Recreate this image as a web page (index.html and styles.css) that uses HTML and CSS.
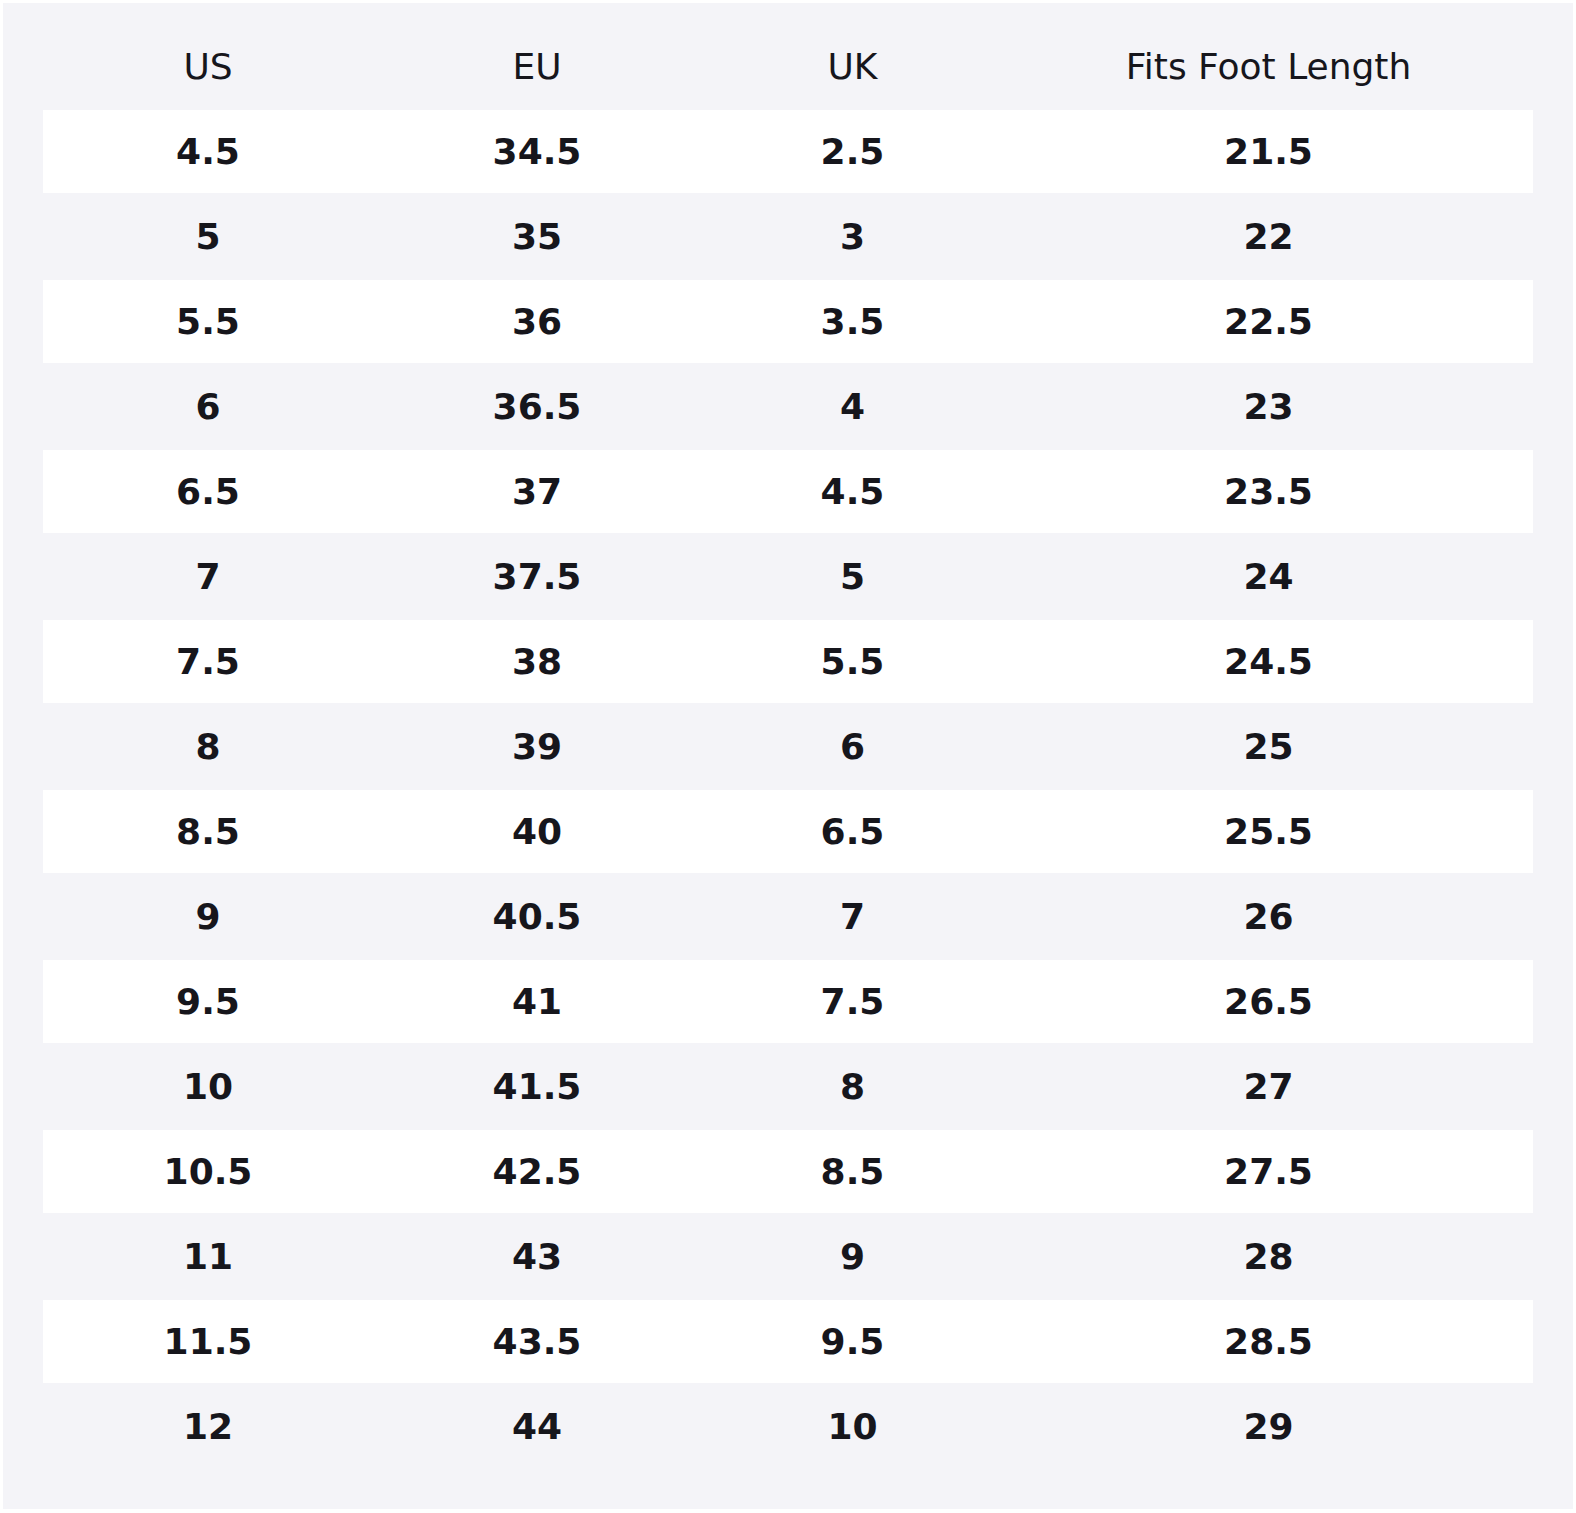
FILE: index.html
```html
<!DOCTYPE html>
<html>
<head>
  <meta charset="UTF-8">
  <title>Size Chart</title>
  <link rel="stylesheet" href="styles.css">
</head>
<body>
  <div class="chart">
    <table class="size-table">
      <colgroup>
        <col class="col-us">
        <col class="col-eu">
        <col class="col-uk">
        <col class="col-foot">
      </colgroup>
      <thead>
        <tr>
          <th>US</th>
          <th>EU</th>
          <th>UK</th>
          <th>Fits Foot Length</th>
        </tr>
      </thead>
      <tbody>
        <tr><td>4.5</td><td>34.5</td><td>2.5</td><td>21.5</td></tr>
        <tr><td>5</td><td>35</td><td>3</td><td>22</td></tr>
        <tr><td>5.5</td><td>36</td><td>3.5</td><td>22.5</td></tr>
        <tr><td>6</td><td>36.5</td><td>4</td><td>23</td></tr>
        <tr><td>6.5</td><td>37</td><td>4.5</td><td>23.5</td></tr>
        <tr><td>7</td><td>37.5</td><td>5</td><td>24</td></tr>
        <tr><td>7.5</td><td>38</td><td>5.5</td><td>24.5</td></tr>
        <tr><td>8</td><td>39</td><td>6</td><td>25</td></tr>
        <tr><td>8.5</td><td>40</td><td>6.5</td><td>25.5</td></tr>
        <tr><td>9</td><td>40.5</td><td>7</td><td>26</td></tr>
        <tr><td>9.5</td><td>41</td><td>7.5</td><td>26.5</td></tr>
        <tr><td>10</td><td>41.5</td><td>8</td><td>27</td></tr>
        <tr><td>10.5</td><td>42.5</td><td>8.5</td><td>27.5</td></tr>
        <tr><td>11</td><td>43</td><td>9</td><td>28</td></tr>
        <tr><td>11.5</td><td>43.5</td><td>9.5</td><td>28.5</td></tr>
        <tr><td>12</td><td>44</td><td>10</td><td>29</td></tr>
      </tbody>
    </table>
  </div>
</body>
</html>
```

FILE: styles.css
```css
/* Shoe size chart */
body {
  margin: 3px;
  background-color: #fff;
  font-family: "DejaVu Sans", Verdana, sans-serif;
  color: #16161c;
}

.chart {
  background-color: #f4f4f8;
  padding: 40px 40px 39px;
}

.size-table {
  width: 100%;
  border-collapse: collapse;
  table-layout: fixed;
}

.col-us { width: 330px; }
.col-eu { width: 328px; }
.col-uk { width: 303px; }
.col-foot { width: 529px; }

.size-table th {
  font-size: 36px;
  font-weight: normal;
  line-height: 41px;
  padding: 3px 0 21px;
  text-align: center;
}

.size-table td {
  font-size: 36px;
  font-weight: bold;
  line-height: 41px;
  padding: 21px 0;
  text-align: center;
  border-top: 2px solid #f4f4f8;
  border-bottom: 2px solid #f4f4f8;
}

.size-table tbody tr:nth-child(odd) td {
  background-color: #fff;
}
```
